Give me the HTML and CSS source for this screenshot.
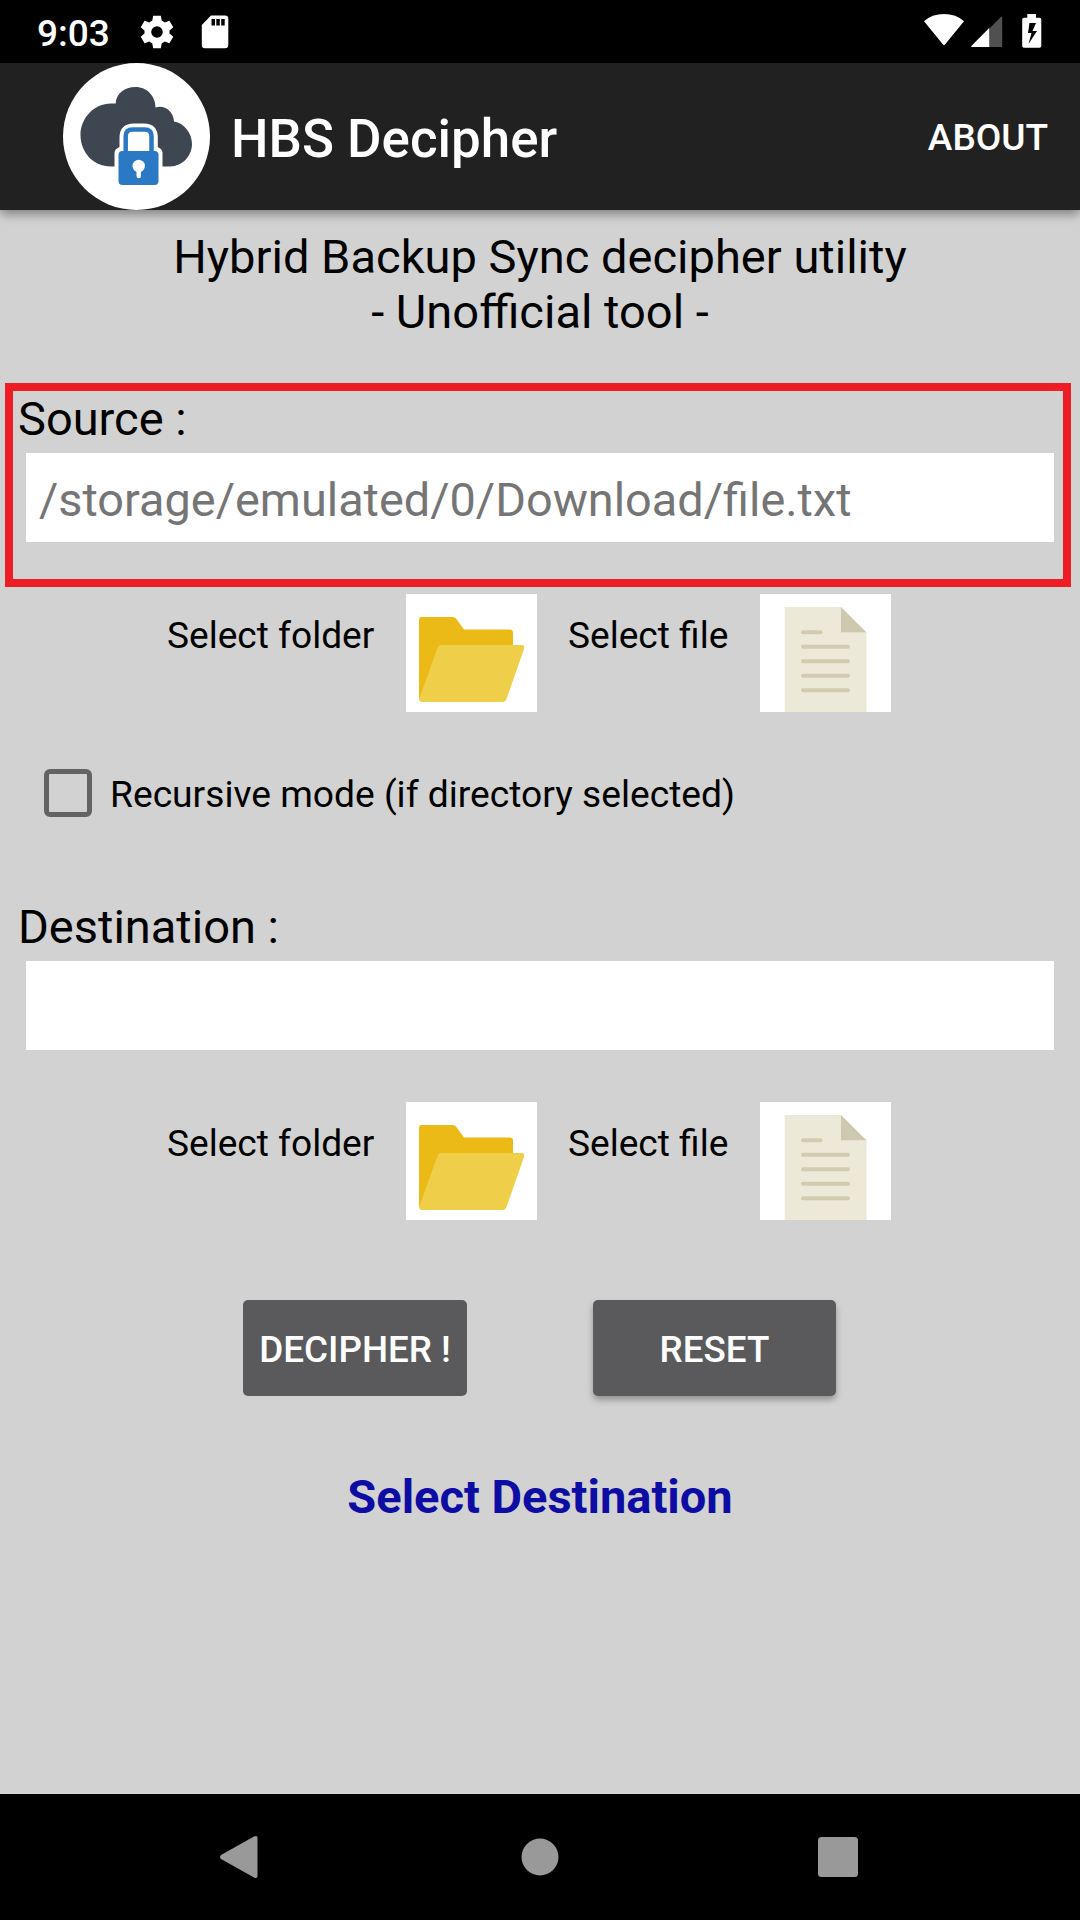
FILE: index.html
```html
<!DOCTYPE html>
<html lang="en">
<head>
<meta charset="utf-8">
<title>HBS Decipher</title>
<link rel="stylesheet" href="styles.css">
</head>
<body>
<svg width="0" height="0" class="defs">
  <symbol id="folder" viewBox="0 0 131 118">
    <path fill="#ebba16" d="M13 26q0-3 3-3H47q2 0 3 1.500L58 35.500H104q3 0 3 3V60L18 107q-5 0-5-4z"/>
    <path fill="#efcf4a" d="M35 51H115.500q3.500 0 2.500 4L100.500 105q-1 3-3 3H16q-3.500 0-2.500-4L31.500 54q1-3 3.500-3z"/>
  </symbol>
  <symbol id="file" viewBox="0 0 131 118">
    <path fill="#ece9d9" d="M24.700 13H81L106.500 38.500V118H24.700z"/>
    <path fill="#cec8b0" d="M81 13V38.300H106.300z"/>
    <path stroke="#d1cbb0" stroke-width="4" stroke-linecap="round" d="M43 38.300H60.500M43 52.700H88M43 67.300H88M43 81.700H88M43 96.300H88"/>
  </symbol>
</svg>
<div class="screen">
  <header class="status">
    <span class="time">9:03</span>
    <svg class="gear" width="34" height="34" viewBox="0 0 34 34"><path fill="#fff" fill-rule="evenodd" d="M13.200.800H20.800L21.800 5.700Q23.300 6.300 24.700 7.400L29.400 5.700 33.300 12.200 29.500 15.500V18.500L33.300 21.800 29.400 28.300 24.700 26.600Q23.300 27.700 21.800 28.300L20.800 33.200H13.200L12.200 28.300Q10.700 27.700 9.300 26.600L4.600 28.300.700 21.800 4.500 18.500V15.500L.700 12.200 4.600 5.700 9.300 7.400Q10.700 6.300 12.200 5.700zM17 11.200A5.800 5.800 0 1 0 17 22.800 5.800 5.800 0 1 0 17 11.200z"/></svg>
    <svg class="sd" width="28" height="34" viewBox="0 0 28 34"><path fill="#fff" fill-rule="evenodd" d="M10 .500H24Q27.300.500 27.300 3.700V30Q27.300 33.200 24 33.200H4Q.800 33.200.800 30V10zM10.500 4V10.500H14V4zM15.300 4V10.500H18.800V4zM20.200 4V10.500H23.700V4z"/></svg>
    <svg class="wifi" width="42" height="34" viewBox="0 0 42 34"><path fill="#fff" d="M1 8.200Q9 1 21 1T41 8.200L22 31.500Q21 32.500 20 31.500z"/></svg>
    <svg class="signal" width="32" height="34" viewBox="0 0 32 34"><path fill="#505050" d="M18 15L29.500 3.200Q31.200 2 31.200 4V33H18z"/><path fill="#fff" d="M18.200 14V33H1.500Q-.500 33 .800 31.500z"/></svg>
    <svg class="battery" width="20" height="34" viewBox="0 0 20 34"><path fill="#fff" fill-rule="evenodd" d="M5.300 0H14V3.700H17.500Q19.300 3.700 19.300 5.500V32Q19.300 33.700 17.500 33.700H2Q.200 33.700.200 32V5.500Q.200 3.700 2 3.700H5.300zM7.500 9L6 19H9.500L6.500 30 15 17H10.500L14 9z"/></svg>
  </header>
  <div class="appbar">
    <svg class="logo" width="147" height="147" viewBox="0 0 147 147">
      <circle cx="73.500" cy="73.500" r="73.500" fill="#fff"/>
      <path fill="#3e4651" d="M48 103.500C30 103.500 17.500 89 17.500 72S31 40.500 48 40.500H52.700C53 31 61 24 72.500 24S92.500 33 92.500 44.500C101 41.500 110.500 48 111 58.500C121 60 129 70 129 81S120 103.500 107 103.500z"/>
      <path fill="#fff" d="M51.500 136V90Q51.500 86 56.500 84V75Q56.500 60.500 71 60.500H81Q94.800 60.500 94.800 75V84Q99.500 86 99.500 90V136z"/>
      <path fill="none" stroke="#2b79c4" stroke-width="4.500" d="M62.700 91V73Q62.700 66.500 69.700 66.500H81.500Q88.500 66.500 88.500 73V91"/>
      <rect x="55.500" y="88" width="40" height="34" rx="4" fill="#2b79c4"/>
      <circle cx="75.700" cy="103" r="6.200" fill="#fff"/>
      <path stroke="#fff" stroke-width="4.400" stroke-linecap="round" d="M75.700 106V113"/>
    </svg>
    <h1 class="title">HBS Decipher</h1>
    <span class="about">ABOUT</span>
  </div>
  <main class="content">
    <p class="intro">Hybrid Backup Sync decipher utility<br>- Unofficial tool -</p>
    <section class="group">
      <div class="highlight"></div>
      <h2 class="label">Source :</h2>
      <div class="field">/storage/emulated/0/Download/file.txt</div>
      <div class="pickers">
        <span class="pick-label">Select folder</span><svg class="pick"><use href="#folder"/></svg>
        <span class="pick-label second">Select file</span><svg class="pick"><use href="#file"/></svg>
      </div>
    </section>
    <div class="option"><span class="checkbox"></span><span class="option-text">Recursive mode (if directory selected)</span></div>
    <section class="group">
      <h2 class="label">Destination :</h2>
      <div class="field"></div>
      <div class="pickers">
        <span class="pick-label">Select folder</span><svg class="pick"><use href="#folder"/></svg>
        <span class="pick-label second">Select file</span><svg class="pick"><use href="#file"/></svg>
      </div>
    </section>
    <div class="actions">
      <div class="button decipher">DECIPHER !</div>
      <div class="button reset">RESET</div>
    </div>
    <p class="message">Select Destination</p>
  </main>
  <nav class="navbar">
    <svg width="38" height="44" viewBox="0 0 38 44"><path fill="#999" d="M1 20L34 1.500Q37.500 0 37.500 3V41Q37.500 44 34 42.500L1 24Q-1 22 1 20z"/></svg>
    <svg width="38" height="38" viewBox="0 0 38 38"><circle cx="19" cy="19" r="18.500" fill="#999"/></svg>
    <svg width="40" height="40" viewBox="0 0 40 40"><rect width="40" height="40" rx="3.500" fill="#999"/></svg>
  </nav>
</div>
</body>
</html>
```
FILE: styles.css
```css
body, h1, h2, p { margin: 0; font-weight: 400; }
body { background: #d2d2d2; font-family: Roboto, sans-serif; color: #000; }
svg { display: block; flex: none; }
.defs { position: absolute; }
.screen { width: 1080px; height: 1920px; display: flex; flex-direction: column; overflow: hidden; }

.status { height: 63px; background: #000; color: #fff; display: flex; align-items: flex-start; flex: none; }
.time { width: 103px; padding: 12px 0 0 37px; font-size: 37px; font-weight: 500; line-height: 43px; }
.gear { margin-top: 15px; }
.sd { margin: 15px 0 0 27px; }
.wifi { margin: 13px 0 0 auto; }
.signal { margin: 14px 0 0 6px; }
.battery { margin: 14px 38px 0 19px; }

.appbar { height: 147px; background: #212121; color: #fff; display: flex; align-items: center; padding: 0 32px 0 63px; box-sizing: border-box; flex: none; box-shadow: 0 4px 10px rgba(0, 0, 0, .4); }
.title { margin: 5px 0 0 21px; font-size: 52.9px; font-weight: 500; line-height: 62px; }
.about { margin: 2px 0 0 auto; font-size: 37px; font-weight: 500; line-height: 43px; }

.content { flex: 1; display: flex; flex-direction: column; padding-top: 19px; }
.intro { font-size: 47.05px; line-height: 55px; text-align: center; }
.group { position: relative; margin-top: 52px; }
.option + .group { margin-top: 82px; }
.highlight { position: absolute; left: 5px; top: -8px; width: 1066px; height: 204px; border: 8px solid #ee1c24; box-sizing: border-box; }
.label { padding-left: 18px; font-size: 47px; line-height: 55px; }
.field { margin: 7px 26px 0; padding: 1px 13px 0; height: 89px; box-sizing: border-box; background: #fff; color: #757575; font-size: 46.85px; line-height: 92px; white-space: nowrap; }
.pickers { margin: 52px 0 0 167px; display: grid; grid-template-columns: 239px 131px 223px 131px; }
.pick { width: 131px; height: 118px; background: #fff; }
.pick-label { padding-top: 20px; font-size: 37.1px; line-height: 43px; }
.second { padding-left: 31px; }
.option { display: flex; align-items: center; gap: 18px; margin: 57px 0 0 44px; height: 48px; font-size: 37.2px; line-height: 43px; }
.option-text { padding-top: 2px; }
.checkbox { width: 48px; height: 48px; box-sizing: border-box; border: 5.5px solid #636363; border-radius: 6px; }

.actions { display: flex; gap: 126px; margin: 80px 0 0 243px; }
.button { height: 96px; line-height: 99px; border-radius: 5px; background: #5a5a5c; color: #fff; font-size: 36.8px; font-weight: 500; text-align: center; }
.decipher { width: 224px; }
.reset { width: 243px; box-shadow: 0 4px 6px rgba(0, 0, 0, .3); }
.message { margin-top: 73px; font-size: 47px; font-weight: 700; line-height: 55px; text-align: center; color: #0d0da3; }

.navbar { height: 126px; background: #000; display: grid; grid-template-columns: 301px 297px 40px; align-items: center; padding-left: 220px; flex: none; }
```
